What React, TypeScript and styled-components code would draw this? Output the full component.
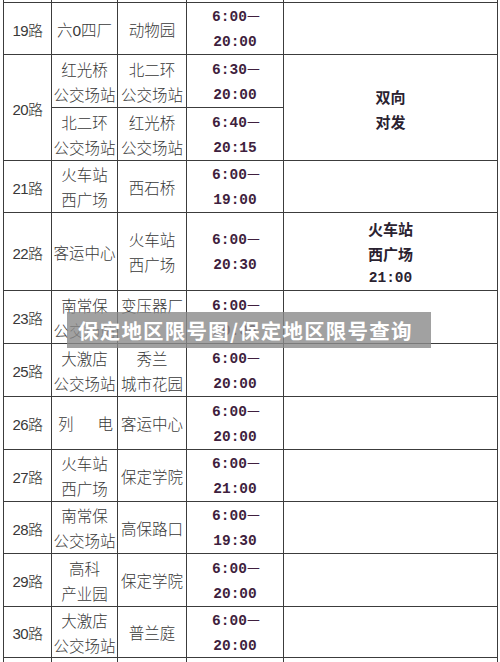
import React from 'react';
import styled, { createGlobalStyle } from 'styled-components';

const GlobalStyle = createGlobalStyle`
	html, body {
		margin: 0;
		padding: 0;
		background: #ffffff;
		overflow: hidden;
	}
	body {
		font-family: 'Liberation Sans', 'Noto Sans CJK SC', sans-serif;
	}
`;

const Page = styled.div`
	position: relative;
	width: 500px;
	height: 662px;
	overflow: hidden;
	background: #ffffff;
`;

const Table = styled.table`
	border-collapse: collapse;
	table-layout: fixed;
	width: 494px;
	margin-left: 3px;
`;

const Col = styled.col<{ $w: number }>`
	width: ${(p) => p.$w}px;
`;

const Row = styled.tr<{ $h: number }>`
	height: ${(p) => p.$h}px;
`;

const Cell = styled.td<{ $stub?: boolean }>`
	border: 1px solid #3c3c3c;
	border-top: ${(p) => (p.$stub ? 'none' : '1px solid #3c3c3c')};
	padding: 0;
	text-align: center;
	vertical-align: middle;
	font-family: 'Liberation Sans', 'Noto Sans CJK SC', sans-serif;
	font-size: 15.5px;
	font-weight: 300;
	line-height: 25px;
	color: #383838;
	white-space: nowrap;
	overflow: hidden;
`;

/* one text line: the taller line box sits the glyphs a little low, as in the scan */
const TextLine = styled.div`
	height: 25px;
	line-height: 29px;
	overflow: visible;
`;

const Route = styled(Cell)`
	font-size: 15px;
	letter-spacing: -0.5px;
`;

const Time = styled(Cell)`
	font-family: 'Liberation Mono', 'Noto Sans CJK SC', monospace;
	font-size: 14.5px;
	font-weight: 700;
	color: #3f1f3e;
`;

const Dash = styled.span`
	font-family: 'Noto Sans CJK SC', sans-serif;
	font-weight: 400;
	letter-spacing: -2px;
	line-height: 0;
`;

const Note = styled(Cell)`
	font-family: 'Noto Sans CJK SC', sans-serif;
	font-size: 15px;
	font-weight: 700;
	color: #2a2230;
`;

const NoteTime = styled(TextLine)`
	font-family: 'Liberation Mono', monospace;
	font-size: 14.5px;
`;

const Spread = styled(TextLine)`
	display: flex;
	justify-content: space-between;
	padding: 0 4px 0 6px;
`;

const Banner = styled.div`
	position: absolute;
	left: 67px;
	top: 312px;
	width: 364px;
	height: 36px;
	display: flex;
	align-items: center;
	padding-left: 11px;
	box-sizing: border-box;
	background: rgba(138, 138, 138, 0.8);
	color: #ffffff;
	font-family: 'Noto Sans CJK SC', sans-serif;
	font-size: 20.5px;
	font-weight: 700;
	letter-spacing: 1.2px;
	white-space: nowrap;
`;

type Line = {
	route: string;
	from: string[];
	to: string[];
	start: string;
	end: string;
	height: number;
};

const lines: Line[] = [
	{ route: '19路', from: ['六0四厂'], to: ['动物园'], start: '6:00', end: '20:00', height: 52 },
	{ route: '20路', from: ['红光桥', '公交场站'], to: ['北二环', '公交场站'], start: '6:30', end: '20:00', height: 53 },
	{ route: '20路', from: ['北二环', '公交场站'], to: ['红光桥', '公交场站'], start: '6:40', end: '20:15', height: 53 },
	{ route: '21路', from: ['火车站', '西广场'], to: ['西石桥'], start: '6:00', end: '19:00', height: 52 },
	{ route: '22路', from: ['客运中心'], to: ['火车站', '西广场'], start: '6:00', end: '20:30', height: 78 },
	{ route: '23路', from: ['南常保', '公交场站'], to: ['变压器厂', ''], start: '6:00', end: '20:00', height: 53 },
	{ route: '25路', from: ['大激店', '公交场站'], to: ['秀兰', '城市花园'], start: '6:00', end: '20:00', height: 53 },
	{ route: '26路', from: [], to: ['客运中心'], start: '6:00', end: '20:00', height: 53 },
	{ route: '27路', from: ['火车站', '西广场'], to: ['保定学院'], start: '6:00', end: '21:00', height: 52 },
	{ route: '28路', from: ['南常保', '公交场站'], to: ['高保路口'], start: '6:00', end: '19:30', height: 52 },
	{ route: '29路', from: ['高科', '产业园'], to: ['保定学院'], start: '6:00', end: '20:00', height: 53 },
	{ route: '30路', from: ['大激店', '公交场站'], to: ['普兰庭'], start: '6:00', end: '20:00', height: 51 },
];

const Stack = ({ items }: { items: string[] }) => (
	<>
		{items.map((t, i) => (
			<TextLine key={i}>{t || '\u00a0'}</TextLine>
		))}
	</>
);

const App = () => {
	return (
		<Page>
			<GlobalStyle />
			<Table>
				<colgroup>
					<Col $w={48} />
					<Col $w={66} />
					<Col $w={69} />
					<Col $w={97} />
					<Col $w={214} />
				</colgroup>
				<tbody>
					<Row $h={2}>
						<Cell $stub />
						<Cell $stub />
						<Cell $stub />
						<Cell $stub />
						<Cell $stub />
					</Row>
					{lines.map((line, i) => {
						const secondOf20 = i === 2;
						return (
							<Row key={i} $h={line.height}>
								{!secondOf20 && (
									<Route rowSpan={i === 1 ? 2 : 1}>
										<TextLine>{line.route}</TextLine>
									</Route>
								)}
								<Cell>
									{line.route === '26路' ? (
										<Spread>
											<span>列</span>
											<span>电</span>
										</Spread>
									) : (
										<Stack items={line.from} />
									)}
								</Cell>
								<Cell>
									<Stack items={line.to} />
								</Cell>
								<Time>
									<TextLine>
										{line.start}
										<Dash>—</Dash>
									</TextLine>
									<TextLine>{line.end}</TextLine>
								</Time>
								{i === 1 && (
									<Note rowSpan={2}>
										<TextLine>双向</TextLine>
										<TextLine>对发</TextLine>
									</Note>
								)}
								{i === 4 && (
									<Note>
										<TextLine>火车站</TextLine>
										<TextLine>西广场</TextLine>
										<NoteTime>21:00</NoteTime>
									</Note>
								)}
								{i !== 1 && i !== 2 && i !== 4 && <Cell />}
							</Row>
						);
					})}
					<Row $h={30}>
						<Cell />
						<Cell />
						<Cell />
						<Cell />
						<Cell />
					</Row>
				</tbody>
			</Table>
			<Banner>保定地区限号图/保定地区限号查询</Banner>
		</Page>
	);
};

export default App;
